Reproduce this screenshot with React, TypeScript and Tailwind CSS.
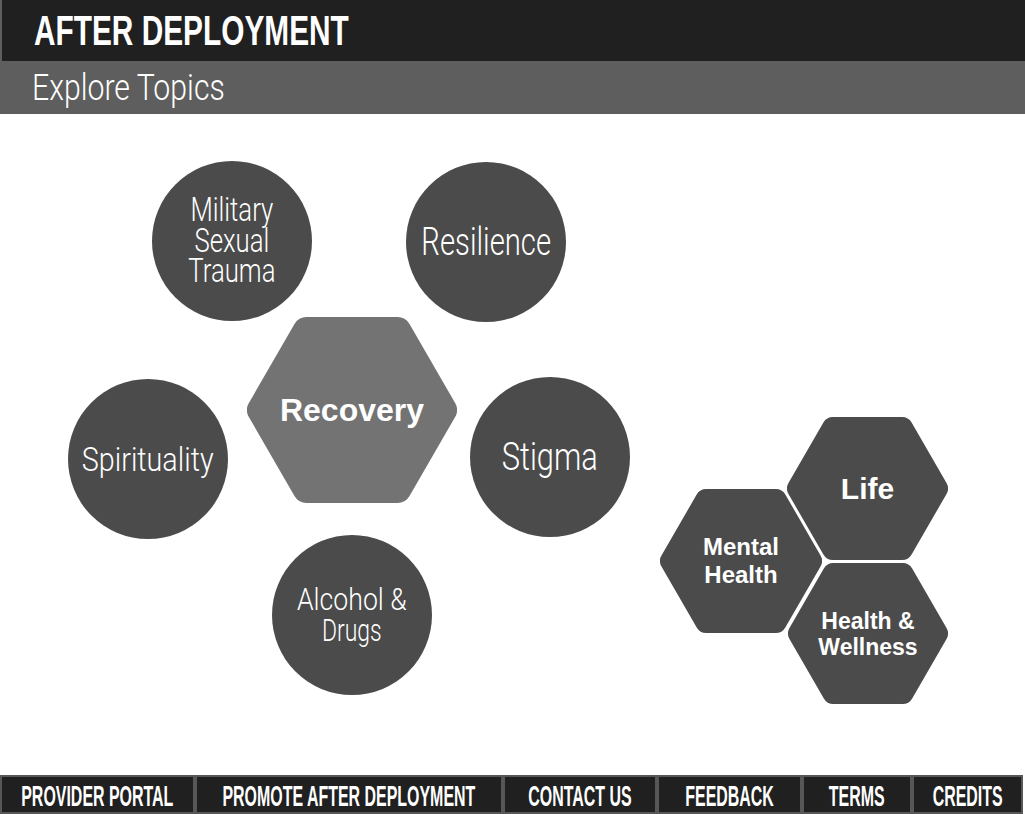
const navItems = [
  { label: "PROVIDER PORTAL", width: "w-[195px]" },
  { label: "PROMOTE AFTER DEPLOYMENT", width: "w-[308px]" },
  { label: "CONTACT US", width: "w-[154px]" },
  { label: "FEEDBACK", width: "w-[145px]" },
  { label: "TERMS", width: "w-[110px]" },
  { label: "CREDITS", width: "w-[111px]" },
];

// each line: [text, horizontal squeeze]
const circles: { lines: [string, string][]; pos: string; text: string }[] = [
  {
    lines: [
      ["Military", "scale-x-[0.78]"],
      ["Sexual", "scale-x-[0.78]"],
      ["Trauma", "scale-x-[0.78]"],
    ],
    pos: "left-[152px] top-[47px]",
    text: "text-[33px] leading-[30.5px]",
  },
  { lines: [["Resilience", "scale-x-[0.77]"]], pos: "left-[406px] top-[48px]", text: "text-[38px] leading-[38px]" },
  { lines: [["Spirituality", "scale-x-[0.87]"]], pos: "left-[68px] top-[265px]", text: "text-[33px] leading-[33px]" },
  { lines: [["Stigma", "scale-x-[0.79]"]], pos: "left-[470px] top-[263px]", text: "text-[39px] leading-[39px]" },
  {
    lines: [
      ["Alcohol &", "scale-x-[0.86]"],
      ["Drugs", "scale-x-[0.74]"],
    ],
    pos: "left-[272px] top-[421px]",
    text: "text-[31px] leading-[31px]",
  },
];

function Hex({ w, h, r, fill }: { w: number; h: number; r: number; fill: string }) {
  const hi = h - 2 * r;
  const q = hi / (2 * Math.sqrt(3));
  const pts = [
    [r + q, r],
    [w - r - q, r],
    [w - r, h / 2],
    [w - r - q, h - r],
    [r + q, h - r],
    [r, h / 2],
  ]
    .map((p) => p.join(","))
    .join(" ");
  return (
    <svg width={w} height={h} viewBox={`0 0 ${w} ${h}`} className="absolute inset-0">
      <polygon points={pts} fill={fill} stroke={fill} strokeWidth={2 * r} strokeLinejoin="round" />
    </svg>
  );
}

export default function App() {
  return (
    <div className="w-full h-[814px] flex flex-col bg-white overflow-hidden">
      <header className="h-[61px] shrink-0 bg-[#1f201f] border-l-2 border-[#5e5e5e] pl-[32px] flex items-center">
        <h1 className="font-['Liberation_Sans',Arial,sans-serif] font-bold text-[42px] leading-[42px] text-white whitespace-nowrap origin-left scale-x-[0.71]">
          AFTER DEPLOYMENT
        </h1>
      </header>
      <div className="h-[53px] shrink-0 bg-[#5e5e5e] pl-[32px] flex items-center">
        <h2 className="font-['Roboto',sans-serif] font-light text-[36px] leading-[36px] text-white whitespace-nowrap origin-left scale-x-[0.84]">
          Explore Topics
        </h2>
      </div>

      <main className="relative flex-1">
        {circles.map((c) => (
          <div
            key={c.lines[0][0]}
            className={`absolute ${c.pos} w-[160px] h-[160px] rounded-full bg-[#4b4b4b] flex items-center justify-center`}
          >
            <div className={`font-['Roboto',sans-serif] font-light text-white text-center whitespace-nowrap ${c.text}`}>
              {c.lines.map(([l, s]) => (
                <div key={l} className={s}>
                  {l}
                </div>
              ))}
            </div>
          </div>
        ))}

        <div className="absolute left-[247px] top-[203px] w-[210px] h-[186px] flex items-center justify-center">
          <Hex w={210} h={186} r={14} fill="#737373" />
          <span className="relative font-['Liberation_Sans',Arial,sans-serif] font-bold text-[32px] leading-[32px] text-white">
            Recovery
          </span>
        </div>

        <div className="absolute left-[787px] top-[303px] w-[161px] h-[143px] flex items-center justify-center">
          <Hex w={161} h={143} r={11} fill="#4b4b4b" />
          <span className="relative font-['Liberation_Sans',Arial,sans-serif] font-bold text-[30px] leading-[30px] text-white">
            Life
          </span>
        </div>

        <div className="absolute left-[660px] top-[375px] w-[162px] h-[144px] flex items-center justify-center">
          <Hex w={162} h={144} r={11} fill="#4b4b4b" />
          <div className="relative font-['Liberation_Sans',Arial,sans-serif] font-bold text-[24px] leading-[28px] text-white text-center">
            <div>Mental</div>
            <div>Health</div>
          </div>
        </div>

        <div className="absolute left-[788px] top-[449px] w-[160px] h-[141px] flex items-center justify-center">
          <Hex w={160} h={141} r={11} fill="#4b4b4b" />
          <div className="relative font-['Liberation_Sans',Arial,sans-serif] font-bold text-[23px] leading-[26px] text-white text-center">
            <div>Health &amp;</div>
            <div>Wellness</div>
          </div>
        </div>
      </main>

      <footer className="h-[39px] shrink-0 flex">
        {navItems.map((n) => (
          <a
            key={n.label}
            href="#"
            className={`${n.width} h-full border-2 border-[#575757] bg-[#1f201f] flex items-center justify-center pt-[3px]`}
          >
            <span className="font-['Liberation_Sans',Arial,sans-serif] font-bold text-[29px] leading-[29px] text-white whitespace-nowrap scale-x-[0.55]">
              {n.label}
            </span>
          </a>
        ))}
      </footer>
    </div>
  );
}
